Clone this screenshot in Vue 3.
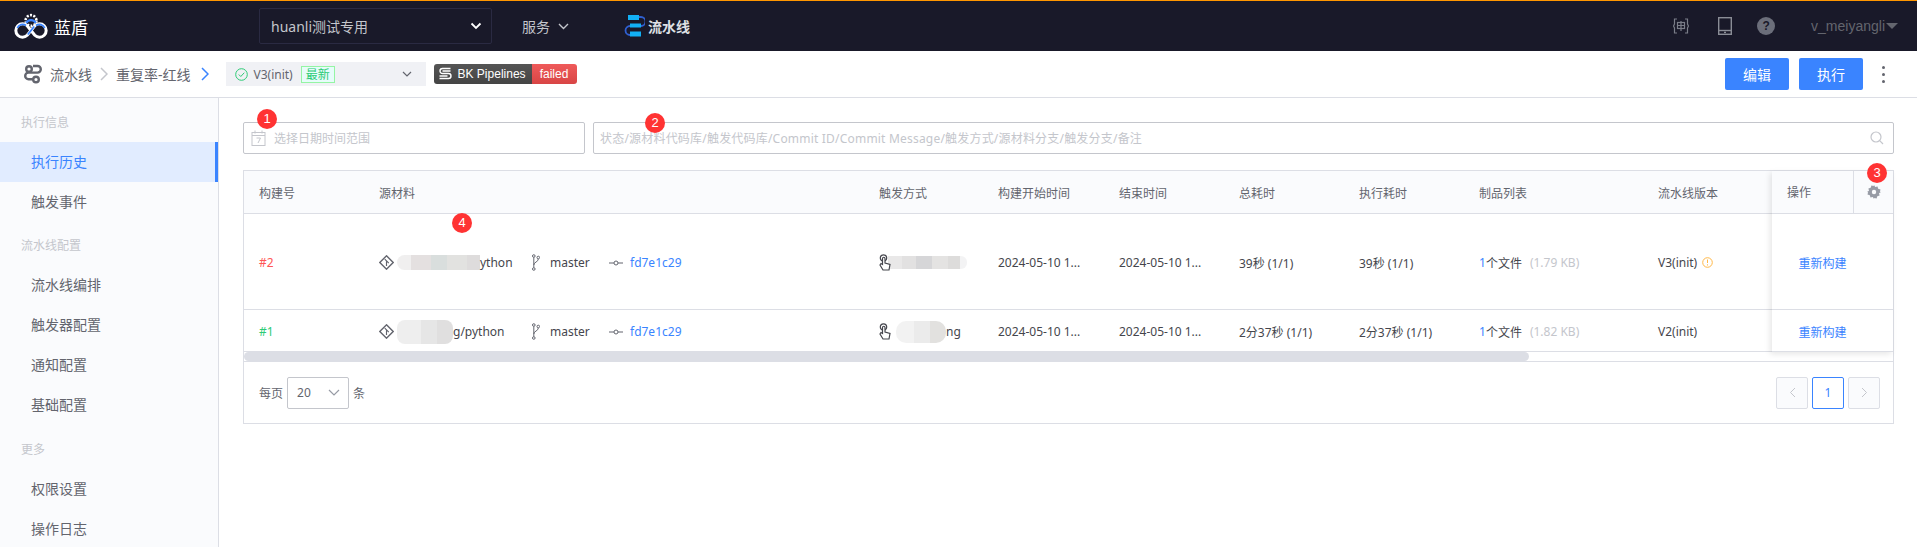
<template>
  <div class="page">
    <header class="topbar">
      <div class="brand">
        <svg class="logo" width="36" height="27" viewBox="0 0 36 27" fill="none">
          <circle cx="18" cy="7.500" r="5.400" stroke="#fff" stroke-width="2.600" stroke-dasharray="2 1.400" />
          <path d="M13.200 10a5.400 5.400 0 0 1 9.600 0" stroke="#3a84ff" stroke-width="2.200" />
          <path d="M14.200 12.700A6.700 6.700 0 1 0 14.200 22.300L21.800 12.700A6.700 6.700 0 1 1 21.800 22.300Z" stroke="#fff" stroke-width="3" />
          <path d="M4.300 15A5.800 5.800 0 0 1 13 12.500M23 12.500A5.800 5.800 0 0 1 31.700 15M14.800 21.500 21.200 13.500" stroke="#3a84ff" stroke-width="1.800" />
        </svg>
        <span class="brand-name">蓝盾</span>
      </div>
      <div class="project-select">
        <span>huanli测试专用</span>
        <svg width="12" height="8" viewBox="0 0 12 8" fill="none"><path d="M1.500 1.500 6 6l4.500-4.500" stroke="#fff" stroke-width="1.800" /></svg>
      </div>
      <div class="service">
        <span>服务</span>
        <svg width="11" height="7" viewBox="0 0 11 7" fill="none"><path d="M1 1l4.500 4.500L10 1" stroke="#c4c6cc" stroke-width="1.400" /></svg>
      </div>
      <div class="nav-current">
        <svg width="21" height="24" viewBox="0 0 21 24" fill="none">
          <path d="M13 3h4a4 4 0 0 1 0 9H6a4 4 0 0 0 0 9h4" stroke="#2f5fd0" stroke-width="1.800" />
          <rect x="4" y="1" width="11" height="5" fill="#12b0f5" />
          <rect x="6" y="9.500" width="11" height="4" fill="#12b0f5" />
          <rect x="6" y="17.500" width="11" height="5" fill="#12b0f5" />
        </svg>
        <span>流水线</span>
      </div>
      <div class="top-right">
        <svg class="tool-icon first" width="16" height="16" viewBox="0 0 16 16" fill="none" stroke="#7a7d88">
          <path d="M4 1H1.500v5L.5 8l1 2v5H4M12 1h2.500v5l1 2-1 2v5H12" stroke-width="1.200" />
          <rect x="4.500" y="4.500" width="7" height="6" stroke-width="1.200" />
          <path d="M8 3v10M4.500 7.500h7" stroke-width="1.200" />
        </svg>
        <svg class="tool-icon" width="14" height="18" viewBox="0 0 14 18" fill="none">
          <rect x=".7" y=".7" width="12.600" height="16.600" stroke="#8a8d96" stroke-width="1.400" />
          <path d="M1 13.500h12" stroke="#8a8d96" stroke-width="1.400" />
          <rect x="6" y="14.700" width="2" height="1.400" fill="#8a8d96" />
        </svg>
        <span class="help">?</span>
        <span class="user">v_meiyangli</span>
        <span class="user-caret"></span>
      </div>
    </header>

    <div class="subbar">
      <svg class="crumb-icon" width="19" height="20" viewBox="0 0 19 20" fill="none" stroke="#63656e" stroke-width="2.400">
        <path d="M10 2h4.500a3.300 3.300 0 0 1 0 6.600H5.500a3.300 3.300 0 0 0 0 6.600H10" />
        <circle cx="6" cy="5" r="2.800" />
        <circle cx="13" cy="15.500" r="2.800" />
      </svg>
      <span class="crumb">流水线</span>
      <svg class="crumb-arrow" width="8" height="14" viewBox="0 0 8 14" fill="none"><path d="M1 1l6 6-6 6" stroke="#c4c6cc" stroke-width="1.500" /></svg>
      <span class="crumb">重复率-红线</span>
      <svg class="crumb-arrow last" width="8" height="14" viewBox="0 0 8 14" fill="none"><path d="M1 1l6 6-6 6" stroke="#3a84ff" stroke-width="1.500" /></svg>
      <div class="version-select">
        <svg width="13" height="13" viewBox="0 0 13 13" fill="none" stroke="#2dcb76">
          <circle cx="6.500" cy="6.500" r="5.800" />
          <path d="M3.800 6.500l2 2 3.500-3.800" />
        </svg>
        <span class="version-name">V3(init)</span>
        <span class="latest">最新</span>
        <svg class="version-caret" width="10" height="6" viewBox="0 0 10 6" fill="none"><path d="M1 1l4 4 4-4" stroke="#63656e" stroke-width="1.200" /></svg>
      </div>
      <div class="shield">
        <span class="shield-name">
          <svg width="16" height="14" viewBox="0 0 15 14" fill="none" stroke="#fff" stroke-width="1.400">
            <path d="M13 1.500H5a2.500 2.500 0 0 0 0 5h6a2.500 2.500 0 0 1 0 5H2" />
            <path d="M5 4h8M2 9h8" />
          </svg>
          BK Pipelines
        </span>
        <span class="shield-state">failed</span>
      </div>
      <div class="actions">
        <button class="primary">编辑</button>
        <button class="primary">执行</button>
        <span class="more"><i></i><i></i><i></i></span>
      </div>
    </div>

    <div class="body">
      <aside class="sidebar">
        <section v-for="group in menu" :key="group.title" class="menu-group">
          <div class="menu-title">{{ group.title }}</div>
          <div
            v-for="item in group.items"
            :key="item"
            class="menu-item"
            :class="{ active: item === '执行历史' }"
          >
            {{ item }}
          </div>
        </section>
      </aside>

      <main class="main">
        <div class="filters">
          <div class="input date-input">
            <svg width="15" height="16" viewBox="0 0 15 16" fill="none" stroke="#c4c6cc">
              <rect x="1" y="2.500" width="13" height="13" />
              <path d="M1 5.500h13M4 .5v3M11 .5v3" />
              <path d="M5.500 8h4L7 13" />
            </svg>
            <span>选择日期时间范围</span>
            <b class="callout callout-1">1</b>
          </div>
          <div class="input search-input">
            <span class="search-hint">状态/源材料代码库/触发代码库/Commit ID/Commit Message/触发方式/源材料分支/触发分支/备注</span>
            <svg width="14" height="14" viewBox="0 0 14 14" fill="none" stroke="#c4c6cc" stroke-width="1.200">
              <circle cx="6" cy="6" r="5" />
              <path d="M9.700 9.700 13 13" />
            </svg>
            <b class="callout callout-2">2</b>
          </div>
        </div>

        <div class="table">
          <div class="rows">
            <div class="row head">
              <span v-for="title in columns" :key="title" class="cell">{{ title }}</span>
            </div>
            <div v-for="row in rows" :key="row.id" class="row" :class="row.height">
              <span class="cell" :class="row.idClass">{{ row.id }}</span>
              <span class="cell">
                <svg class="git" width="15" height="15" viewBox="0 0 13 13" fill="none" stroke="#63656e">
                  <path d="M6.500 .7 12.300 6.500 6.500 12.300 .7 6.500z" stroke-width="1.200" />
                  <path d="M5 3.500l3.500 3.500M6.500 5.500v4" />
                </svg>
                <span class="repo">
                  <span class="patch" :class="row.repoPatch"></span>
                  <span>{{ row.repoTail }}</span>
                </span>
                <svg class="branch" width="8" height="17" viewBox="0 0 8 17" fill="none" stroke="#63656e">
                  <circle cx="1.800" cy="2" r="1.300" />
                  <circle cx="1.800" cy="15" r="1.300" />
                  <circle cx="6.300" cy="3.500" r="1.300" />
                  <path d="M1.800 3.300v10.400M6.300 5c0 3-4.500 3-4.500 6" />
                </svg>
                <span class="branch-name">master</span>
                <svg class="commit" width="14" height="6" viewBox="0 0 14 6" fill="none" stroke="#63656e">
                  <circle cx="7" cy="3" r="2" />
                  <path d="M0 3h5M9 3h5" stroke-width="1.200" />
                </svg>
                <a class="link">fd7e1c29</a>
              </span>
              <span class="cell">
                <svg class="hand" width="12" height="17" viewBox="0 0 12 17" fill="none" stroke="#45464d" stroke-width="1.200">
                  <circle cx="4.500" cy="4" r="3.200" />
                  <path d="M3.500 4.500v6L2 9.500 1 11l3 5h6l1-5.500-5-1.500V4.500a1.200 1.200 0 0 0-2.500 0z" fill="#fff" />
                </svg>
                <span class="patch" :class="row.userPatch"></span>
                <span>{{ row.userTail }}</span>
              </span>
              <span class="cell">2024-05-10 1...</span>
              <span class="cell">2024-05-10 1...</span>
              <span class="cell">{{ row.total }}</span>
              <span class="cell">{{ row.total }}</span>
              <span class="cell">
                <a class="link">1</a>个文件<span class="file-size">({{ row.size }})</span>
              </span>
              <span class="cell">
                {{ row.version }}
                <svg v-if="row.warn" class="warn" width="11" height="11" viewBox="0 0 11 11" fill="none" stroke="#ffb848">
                  <circle cx="5.500" cy="5.500" r="4.800" />
                  <path d="M5.500 2.500v3.500M5.500 7.300v1.200" />
                </svg>
              </span>
            </div>

            <div class="fixed-col">
              <div class="row head fixed-head">
                <span class="op-title">操作</span>
                <span class="gear">
                  <svg width="14" height="14" viewBox="0 0 14 14">
                    <path d="M7 0l1.200 2 2.300-.6.700 2.300 2.300.7-.6 2.300L14 7l-2 1.200.6 2.300-2.300.7-.7 2.300-2.300-.6L7 14l-1.200-2-2.300.6-.7-2.300-2.300-.7.600-2.300L0 7l2-1.200-.6-2.300 2.300-.7.700-2.300 2.300.6z" fill="#979ba5" fill-rule="evenodd" />
                    <circle cx="7" cy="7" r="2.200" fill="#fafbfd" />
                  </svg>
                  <b class="callout callout-3">3</b>
                </span>
              </div>
              <div v-for="row in rows" :key="row.id" class="row fixed-cell" :class="row.height">
                <a class="link">重新构建</a>
              </div>
            </div>
            <b class="callout callout-4">4</b>
          </div>

          <div class="scrollbar"><div class="thumb"></div></div>

          <div class="footer">
            <span>每页</span>
            <div class="size-select">
              <span>20</span>
              <svg width="12" height="7" viewBox="0 0 12 7" fill="none"><path d="M1 1l5 5 5-5" stroke="#979ba5" stroke-width="1.200" /></svg>
            </div>
            <span>条</span>
            <div class="pager">
              <span class="page-btn disabled">
                <svg width="7" height="11" viewBox="0 0 7 11" fill="none"><path d="M6 1 1.500 5.500 6 10" stroke="#c4c6cc" /></svg>
              </span>
              <span class="page-btn current">1</span>
              <span class="page-btn disabled">
                <svg width="7" height="11" viewBox="0 0 7 11" fill="none"><path d="M1 1l4.500 4.500L1 10" stroke="#c4c6cc" /></svg>
              </span>
            </div>
          </div>
        </div>
      </main>
    </div>
  </div>
</template>

<script setup>
const menu = [
  { title: '执行信息', items: ['执行历史', '触发事件'] },
  { title: '流水线配置', items: ['流水线编排', '触发器配置', '通知配置', '基础配置'] },
  { title: '更多', items: ['权限设置', '操作日志'] }
]

const columns = ['构建号', '源材料', '触发方式', '构建开始时间', '结束时间', '总耗时', '执行耗时', '制品列表', '流水线版本']

const rows = [
  {
    id: '#2',
    idClass: 'failed',
    height: 'tall',
    repoPatch: 'repo-a',
    repoTail: 'ython',
    userPatch: 'user-a',
    userTail: '',
    total: '39秒 (1/1)',
    size: '1.79 KB',
    version: 'V3(init)',
    warn: true
  },
  {
    id: '#1',
    idClass: 'success',
    height: 'short',
    repoPatch: 'repo-b',
    repoTail: 'g/python',
    userPatch: 'user-b',
    userTail: 'ng',
    total: '2分37秒 (1/1)',
    size: '1.82 KB',
    version: 'V2(init)',
    warn: false
  }
]
</script>

<style>
html,
body {
  background: #fff;
  overflow: hidden;
}
</style>

<style scoped>
.page {
  width: 1917px;
  height: 547px;
  overflow: hidden;
  font-family: "Noto Sans", "Noto Sans CJK SC", sans-serif;
  font-size: 12px;
  color: #63656e;
}

.topbar {
  display: flex;
  align-items: center;
  height: 51px;
  box-sizing: border-box;
  border-top: 1px solid #ff9600;
  background: #191929;
}

.brand {
  display: flex;
  align-items: center;
  width: 259px;
  padding-left: 13px;
  box-sizing: border-box;
}

.brand-name {
  margin-left: 5px;
  font-size: 17px;
  color: #fff;
}

.project-select {
  display: flex;
  align-items: center;
  justify-content: space-between;
  width: 233px;
  height: 36px;
  padding: 0 9px 0 11px;
  box-sizing: border-box;
  border: 1px solid #2a2a42;
  border-radius: 2px;
  font-size: 14px;
  color: #c4c6cc;
}

.service {
  display: flex;
  align-items: center;
  gap: 8px;
  margin-left: 30px;
  font-size: 14px;
  color: #c4c6cc;
}

.nav-current {
  display: flex;
  align-items: center;
  gap: 3px;
  margin-left: 55px;
  font-size: 14px;
  font-weight: 700;
  color: #dfe0e5;
}

.top-right {
  display: flex;
  align-items: center;
  margin-left: auto;
  padding-right: 19px;
}

.tool-icon {
  margin-right: 25px;
}

.tool-icon.first {
  margin-right: 29px;
}

.help {
  width: 18px;
  height: 18px;
  margin-right: 36px;
  border-radius: 50%;
  background: #6b6e7a;
  color: #191929;
  font: 700 12px/18px "Liberation Sans", sans-serif;
  text-align: center;
}

.user {
  font: 14px "Liberation Sans", sans-serif;
  color: #63656e;
}

.user-caret {
  margin-left: 1px;
  border: 6px solid transparent;
  border-top: 6px solid #63656e;
  border-bottom: 0;
}

.subbar {
  display: flex;
  align-items: center;
  height: 47px;
  padding-left: 23px;
  box-sizing: border-box;
  border-bottom: 1px solid #dcdee5;
}

.crumb-icon {
  margin-right: 8px;
}

.crumb {
  font-size: 14px;
  color: #63656e;
}

.crumb-arrow {
  margin: 0 8px;
}

.crumb-arrow.last {
  margin: 0 9px 0 10px;
}

.version-select {
  display: flex;
  align-items: center;
  width: 200px;
  height: 24px;
  margin-left: 8px;
  padding-left: 9px;
  box-sizing: border-box;
  background: #f0f1f5;
}

.version-name {
  margin-left: 6px;
}

.latest {
  margin-left: 8px;
  padding: 0 4px;
  line-height: 15px;
  border: 1px solid #94f5a4;
  background: #e7fcfa;
  color: #2dcb76;
}

.version-caret {
  margin-left: auto;
  margin-right: 14px;
}

.shield {
  display: flex;
  height: 20px;
  margin-left: 8px;
  border-radius: 3px;
  overflow: hidden;
  font: 12px/20px "Liberation Sans", sans-serif;
  color: #fff;
}

.shield-name {
  display: flex;
  align-items: center;
  gap: 5px;
  width: 98px;
  padding-left: 3px;
  box-sizing: border-box;
  background: linear-gradient(#555, #444);
  white-space: nowrap;
}

.shield-state {
  width: 45px;
  text-align: center;
  background: linear-gradient(#ef5a5a, #d84545);
}

.actions {
  display: flex;
  align-items: center;
  gap: 10px;
  margin-left: auto;
  padding-right: 32px;
}

.primary {
  width: 64px;
  height: 32px;
  border: 0;
  border-radius: 2px;
  background: #3a84ff;
  color: #fff;
  font: 14px "Noto Sans CJK SC", sans-serif;
}

.more {
  display: flex;
  flex-direction: column;
  gap: 4px;
  margin-left: 9px;
}

.more i {
  width: 3px;
  height: 3px;
  border-radius: 50%;
  background: #63656e;
}

.body {
  display: flex;
  height: 449px;
}

.sidebar {
  flex: none;
  width: 219px;
  box-sizing: border-box;
  padding-top: 4px;
  border-right: 1px solid #dcdee5;
  background: #fafbfd;
}

.menu-group + .menu-group {
  margin-top: 3px;
}

.menu-group:last-child {
  margin-top: 4px;
}

.menu-title {
  height: 40px;
  padding-left: 21px;
  line-height: 42px;
  color: #c4c6cc;
}

.menu-item {
  height: 40px;
  padding-left: 31px;
  line-height: 40px;
  font-size: 14px;
}

.menu-item.active {
  border-right: 3px solid #3a84ff;
  background: #e1ecff;
  color: #3a84ff;
}

.main {
  flex: 1;
  min-width: 0;
  padding: 24px 23px 0 24px;
}

.filters {
  display: flex;
  gap: 8px;
}

.input {
  position: relative;
  display: flex;
  align-items: center;
  height: 32px;
  box-sizing: border-box;
  border: 1px solid #c4c6cc;
  border-radius: 2px;
  color: #c4c6cc;
}

.date-input {
  flex: none;
  width: 342px;
  padding-left: 7px;
  gap: 8px;
}

.search-input {
  flex: 1;
  justify-content: space-between;
  padding: 0 9px 0 6px;
}

.search-hint {
  letter-spacing: 0.2px;
}

.callout {
  position: absolute;
  width: 20px;
  height: 20px;
  border-radius: 50%;
  background: #ff3333;
  color: #fff;
  font: 400 13px/20px "Liberation Sans", sans-serif;
  text-align: center;
}

.callout-1 {
  top: -14px;
  left: 13px;
}

.callout-2 {
  top: -10px;
  left: 51px;
}

.callout-3 {
  top: -8px;
  left: 13px;
}

.callout-4 {
  top: 42px;
  left: 208px;
}

.table {
  margin-top: 16px;
  border: 1px solid #dcdee5;
}

.rows {
  position: relative;
}

.row {
  display: grid;
  grid-template-columns: 120px 500px 119px 121px 120px 120px 120px 179px 1fr;
  align-items: center;
  box-sizing: border-box;
  border-bottom: 1px solid #dcdee5;
  color: #45464d;
}

.head {
  height: 43px;
  padding-top: 1px;
  background: #fafbfd;
  color: #63656e;
}

.tall {
  height: 96px;
  padding-top: 2px;
}

.short {
  height: 42px;
  padding-top: 2px;
}

.cell {
  display: flex;
  align-items: center;
  padding-left: 15px;
  white-space: nowrap;
  min-width: 0;
}

.failed {
  color: #ff5656;
}

.success {
  color: #2dcb76;
}

.link {
  color: #3a84ff;
}

.git {
  flex: none;
  margin-right: 3px;
}

.repo {
  display: flex;
  align-items: center;
  flex: none;
  width: 113px;
}

.patch {
  flex: none;
  display: inline-block;
}

.repo-a {
  width: 83px;
  height: 15px;
  border-radius: 8px 0 0 8px;
  background: linear-gradient(90deg, #f0efef 0 14px, #e4e0e0 14px 34px, #d9dedd 34px 50px, #e2e2e0 50px 70px, #dedcdc 70px);
}

.repo-b {
  width: 56px;
  height: 24px;
  border-radius: 8px;
  background: linear-gradient(90deg, #eeeeee 0 24px, #e6e6e6 24px 40px, #e0dfdf 40px);
}

.user-a {
  width: 79px;
  height: 13px;
  margin-left: -3px;
  border-radius: 0 6px 6px 0;
  background: linear-gradient(90deg, #e9e8e8 0 14px, #e2e1e1 14px 28px, #d6d6d8 28px 44px, #e4e3e2 44px 60px, #dddcdb 60px 72px, #f3f3f4 72px);
}

.user-b {
  width: 50px;
  height: 22px;
  margin-left: 5px;
  border-radius: 10px;
  background: linear-gradient(90deg, #f2f2f2 0 18px, #ebebeb 18px 34px, #e2e1df 34px);
}

.branch {
  flex: none;
  margin-left: 22px;
}

.branch-name {
  margin-left: 10px;
  width: 39px;
}

.commit {
  flex: none;
  margin: 0 7px 0 20px;
}

.hand {
  flex: none;
  position: relative;
  z-index: 1;
}

.file-size {
  margin-left: 8px;
  color: #c4c6cc;
}

.warn {
  margin-left: 5px;
}

.fixed-col {
  position: absolute;
  top: 0;
  right: 0;
  bottom: 0;
  width: 121px;
  background: #fff;
  box-shadow: -2px 2px 6px rgba(0, 0, 0, 0.1);
}

.fixed-head {
  display: flex;
  align-items: stretch;
  padding: 0;
}

.op-title {
  width: 81px;
  padding: 1px 0 0 15px;
  box-sizing: border-box;
  line-height: 42px;
}

.gear {
  position: relative;
  display: flex;
  align-items: center;
  justify-content: center;
  flex: 1;
  border-left: 1px solid #dcdee5;
}

.fixed-cell {
  display: flex;
  align-items: center;
  justify-content: center;
  padding-right: 20px;
}

.scrollbar {
  height: 9px;
  border-bottom: 1px solid #dcdee5;
}

.thumb {
  width: 1285px;
  height: 9px;
  border-radius: 5px;
  background: #dcdee5;
}

.footer {
  display: flex;
  align-items: center;
  height: 61px;
  padding: 0 13px 0 15px;
  box-sizing: border-box;
}

.size-select {
  display: flex;
  align-items: center;
  justify-content: space-between;
  width: 62px;
  height: 32px;
  margin: 0 4px;
  padding: 0 8px 0 9px;
  box-sizing: border-box;
  border: 1px solid #c4c6cc;
  border-radius: 2px;
}

.pager {
  display: flex;
  gap: 4px;
  margin-left: auto;
}

.page-btn {
  display: flex;
  align-items: center;
  justify-content: center;
  width: 32px;
  height: 32px;
  box-sizing: border-box;
  border: 1px solid #dcdee5;
  border-radius: 2px;
}

.page-btn.disabled {
  background: #fafbfd;
}

.page-btn.current {
  border-color: #3a84ff;
  color: #3a84ff;
}
</style>
